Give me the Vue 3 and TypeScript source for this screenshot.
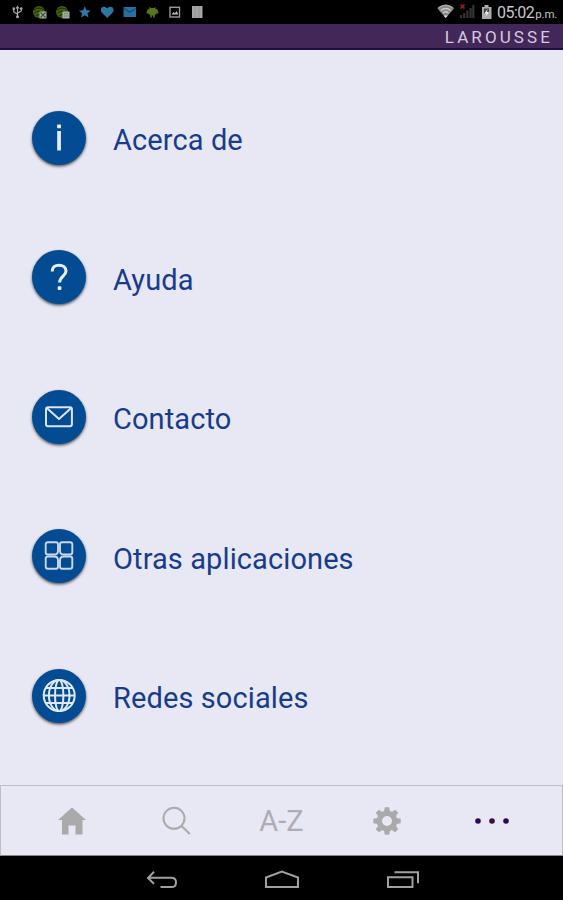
<script setup lang="ts">
type IconName = 'info' | 'help' | 'mail' | 'apps' | 'globe'

interface MenuEntry {
  icon: IconName
  label: string
}

const entries: MenuEntry[] = [
  { icon: 'info', label: 'Acerca de' },
  { icon: 'help', label: 'Ayuda' },
  { icon: 'mail', label: 'Contacto' },
  { icon: 'apps', label: 'Otras aplicaciones' },
  { icon: 'globe', label: 'Redes sociales' },
]

const gearTeeth: number[] = [0, 45, 90, 135, 180, 225, 270, 315]
</script>

<template>
  <div class="screen">
    <header class="status">
      <svg class="status-icons" viewBox="0 0 220 24" aria-hidden="true">
        <g fill="none" stroke="#a9a9a9" stroke-width="1.2">
          <path d="M17.5 7v10M13.7 8.5v3.2l3.8 2.6M21.3 8.5v2.5l-3.8 2.3" />
        </g>
        <path d="M15.500 8.500l2-3 2 3z" fill="#a9a9a9" />
        <circle cx="17.500" cy="16.800" r="1.500" fill="#a9a9a9" />
        <rect x="12.600" y="7.500" width="2.300" height="2.300" fill="#a9a9a9" />
        <circle cx="21.200" cy="8.600" r="1.300" fill="#a9a9a9" />
        <g v-for="x in [33, 56]" :key="x" :transform="`translate(${x} 6)`">
          <circle cx="6" cy="6" r="6" fill="#40600f" />
          <path d="M1 4q5-4 10 0M1.500 7q4-3.500 8 0M3 10q3-3 5 0" fill="none" stroke="#182608" stroke-width="1" />
          <rect x="6.500" y="5.500" width="7" height="7" fill="#a3afa0" />
          <path v-if="x === 33" d="M7.500 6.500l5 5M12.500 6.500l-5 5" stroke="#3e5639" stroke-width="1.200" />
          <path v-else d="M8 10h4M8 7.700h4" stroke="#798773" stroke-width="1" />
        </g>
        <path d="M84.800 6.200l1.700 4 4.200.3-3.200 2.800 1 4.300-3.700-2.300-3.700 2.300 1-4.300-3.200-2.800 4.200-.3z" fill="#3077a5" />
        <path d="M107.200 18l-5-5.100C98.500 9 103 4 107.200 8.300c4.200-4.300 8.700.7 5 4.600z" fill="#3077a5" />
        <rect x="123.500" y="7" width="12.500" height="10" fill="#276f9e" />
        <path d="M124 8.500l5.700 3.700 5.800-3.700" fill="none" stroke="#133f5c" stroke-width="1" />
        <path d="M146.500 13.500c0-3.500 2-5.500 6-5.500s6 2 6 5.500h-2.300v1h-1.400v3h-1.600v-2h-1.400v2h-1.600v-3h-1.400v-1z" fill="#567719" />
        <path d="M149.500 7l1.500 2M155.500 7L154 9" stroke="#567719" />
        <rect x="170" y="7.300" width="9.500" height="9.700" fill="none" stroke="#999" stroke-width="1.400" />
        <path d="M171.500 14.500l2-2.500 1.500 1.200 1.700-2.200 1.500 3.500z" fill="#bbb" />
        <rect x="192" y="6" width="10.500" height="12" fill="#a5a5a5" />
        <path d="M195 6v12M199 6v12" stroke="#8b8b8b" stroke-width=".7" />
      </svg>
      <div class="status-right">
        <svg class="signal-icons" viewBox="0 0 58 24" aria-hidden="true">
          <path d="M.5 8.500Q8.700 2 17 8.500L8.700 18z" fill="#888" />
          <path d="M3.800 10.500q5-4 10 0M6 13q2.700-2.400 5.500 0" fill="none" stroke="#c9c9c9" stroke-width="1.300" />
          <path d="M1.200 8Q8.700 2.500 16.200 8" fill="none" stroke="#aaa" stroke-width="1.300" />
          <path d="M6.700 15.500h4l-2 2.500z" fill="#ddd" />
          <path d="M24 18v-3M27.200 18v-5M30.400 18V10.500M33.600 18V8M36.300 18V5" stroke="#353535" stroke-width="2.200" />
          <path d="M23.500 4.500l4 4M27.500 4.500l-4 4" stroke="#a51d20" stroke-width="1.500" />
          <path d="M45 7h2.500V5h4v2H54.500v12H45z" fill="#aaa" />
          <path d="M47 8.500h5v4l-2.500-1-2.500 2z" fill="#414141" />
          <path d="M50.500 9l-3 4.500h2l-1 3.500 3.500-5h-2z" fill="#eee" />
        </svg>
        <span class="time">05:02</span><span class="meridiem">p.m.</span>
      </div>
    </header>

    <div class="brand"><span>LAROUSSE</span></div>

    <main class="menu">
      <a v-for="entry in entries" :key="entry.label" class="row">
        <span class="badge">
          <svg viewBox="0 0 54 54" aria-hidden="true">
            <g v-if="entry.icon === 'info'" fill="#e9eefa">
              <rect x="25.100" y="13.500" width="3.900" height="3.700" rx=".6" />
              <rect x="25.200" y="20" width="3.700" height="19.500" />
            </g>
            <g v-else-if="entry.icon === 'help'">
              <path d="M20.200 21.500C20.200 17 23 15.200 27 15.200s7 2.100 7 5.900c0 5-6.400 5.200-6.400 11.500" fill="none" stroke="#e9eefa" stroke-width="3" />
              <rect x="25.700" y="36.300" width="3.700" height="3.700" rx=".7" fill="#e9eefa" />
            </g>
            <g v-else-if="entry.icon === 'mail'" fill="none" stroke="#dce5f6" stroke-width="2" stroke-linejoin="round">
              <rect x="14" y="17.200" width="25.900" height="19" rx="2" />
              <path d="M14.800 18l12.200 11L39.200 18" />
            </g>
            <g v-else-if="entry.icon === 'apps'" fill="none" stroke="#cbd7f0" stroke-width="1.900">
              <path d="M16 13.200h8q2 0 2 2v6.500q0 3.800-3.800 3.800H16q-2.300 0-2.300-2.300V15.500q0-2.300 2.300-2.300z" />
              <path d="M38 13.200h-8q-2 0-2 2v6.500q0 3.800 3.800 3.800H38q2.300 0 2.300-2.300V15.500q0-2.300-2.300-2.300z" />
              <path d="M16 39.800h8q2 0 2-2v-6.500q0-3.800-3.800-3.800H16q-2.300 0-2.300 2.300V37.500q0 2.300 2.300 2.300z" />
              <path d="M38 39.800h-8q-2 0-2-2v-6.500q0-3.800 3.800-3.800H38q2.300 0 2.300 2.300V37.500q0 2.300-2.300 2.300z" />
            </g>
            <g v-else fill="none" stroke="#dfe8fa" stroke-width="2">
              <circle cx="27.200" cy="26.500" r="15.500" />
              <ellipse cx="27.200" cy="26.500" rx="10.300" ry="15.500" />
              <ellipse cx="27.200" cy="26.500" rx="4.200" ry="15.500" />
              <path d="M11.500 26.500h31.400M13.700 19h27M13.700 34h27" />
            </g>
          </svg>
        </span>
        <span class="label">{{ entry.label }}</span>
      </a>
    </main>

    <nav class="tabs">
      <span class="tab">
        <svg width="30" height="30" viewBox="0 0 30 30"><path d="M15 1.500L29 14h-3.500v14.500H18.500v-9h-7v9H5V14H1z" fill="#aaa" /></svg>
      </span>
      <span class="tab">
        <svg width="30" height="30" viewBox="0 0 30 30" fill="none" stroke="#aaa" stroke-width="2"><circle cx="12" cy="12.300" r="10.500" /><path d="M19.300 19.700l8.500 8.300" /></svg>
      </span>
      <span class="tab az">A-Z</span>
      <span class="tab">
        <svg width="30" height="30" viewBox="-15 -15 30 30">
          <circle r="7.700" fill="none" stroke="#aaa" stroke-width="5.400" />
          <path v-for="angle in gearTeeth" :key="angle" d="M-3-9.200l.8-4.500h4.400l.8 4.500z" fill="#aaa" :transform="`rotate(${angle})`" />
        </svg>
      </span>
      <span class="tab">
        <svg width="40" height="30" viewBox="-20 -15 40 30"><g fill="#2b0b4d"><circle cx="-14" r="2.800" /><circle cx="0" r="2.800" fill="#3a0d45" /><circle cx="14" r="2.800" /></g></svg>
      </span>
    </nav>

    <footer class="system">
      <svg width="32" height="20" viewBox="0 0 32 20"><path d="M8 1.800L2 8l6 5.700M2.500 7.800h23q4.500 0 4.500 4.600t-4.500 4.600H14.500" /></svg>
      <svg width="36" height="20" viewBox="0 0 36 20"><path d="M2 17V7.500L17.800 1.500 34 7.500V17z" /></svg>
      <svg width="34" height="20" viewBox="0 0 34 20"><path d="M2 7.300h24.500V17H2zM8.500 2.200H32v11" /></svg>
    </footer>
  </div>
</template>

<style>
body {
  margin: 0;
  background: #e7e8f4;
}
</style>

<style scoped>
.screen {
  width: 563px;
  height: 900px;
  display: flex;
  flex-direction: column;
  overflow: hidden;
  background: #e7e8f4;
  font-family: Roboto, "Liberation Sans", sans-serif;
}
.status {
  flex: none;
  height: 24px;
  display: flex;
  justify-content: space-between;
  background: #000;
  color: #c8c8c8;
}
.status-icons {
  width: 220px;
  height: 24px;
}
.status-right {
  display: flex;
  align-items: baseline;
  width: 126px;
  line-height: 26px;
}
.signal-icons {
  width: 58px;
  height: 24px;
  align-self: flex-start;
  margin-right: 2px;
}
.time {
  font-size: 16px;
  letter-spacing: -0.5px;
}
.meridiem {
  margin-left: 1px;
  font-size: 11.5px;
  letter-spacing: -0.2px;
}
.brand {
  box-sizing: border-box;
  flex: none;
  height: 26px;
  padding-right: 11px;
  border-bottom: 2px solid #220a42;
  background: #432759;
  color: #d5c9df;
  font-size: 17px;
  line-height: 26px;
  letter-spacing: 3.1px;
  margin: 0;
  text-align: right;
}
.brand span {
  margin-right: -1px;
}
.menu {
  box-sizing: border-box;
  flex: none;
  height: 735px;
  padding: 18px 0 19px 31.5px;
  display: grid;
  grid-template-rows: repeat(5, 139.5px);
}
.row {
  display: flex;
  align-items: center;
  gap: 27.5px;
  color: #173c8d;
}
.badge {
  flex: none;
  width: 54px;
  height: 54px;
  border-radius: 50%;
  background: #034b93;
  box-shadow: 0 1.5px 3px rgba(0, 0, 0, 0.65);
}
.badge svg {
  display: block;
  width: 54px;
  height: 54px;
}
.label {
  padding-top: 4.6px;
  font-size: 29px;
  line-height: 36px;
  letter-spacing: 0.1px;
  white-space: nowrap;
}
.tabs {
  box-sizing: border-box;
  flex: none;
  height: 71px;
  padding: 0 17px;
  display: grid;
  grid-template-columns: repeat(5, 105px);
  justify-content: center;
  border: 1.5px solid #bdbdc8;
  border-bottom-color: #85858b;
}
.tab {
  display: flex;
  align-items: center;
  justify-content: center;
}
.az {
  color: #adadb1;
  font-size: 29px;
}
.system {
  flex: 1;
  display: flex;
  align-items: center;
  justify-content: center;
  gap: 86px;
  padding: 4px 0 0 2px;
  background: #000;
}
.system svg {
  fill: none;
  stroke: #a0a0a0;
  stroke-width: 2;
}
</style>
